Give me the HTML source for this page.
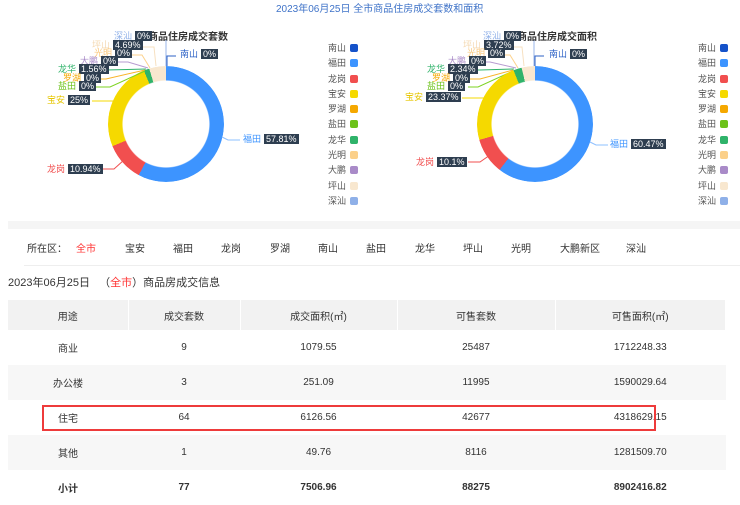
<!DOCTYPE html>
<html><head><meta charset="utf-8"><style>
*{margin:0;padding:0;box-sizing:border-box}
body{width:740px;height:505px;overflow:hidden;background:#fff;font-family:"Liberation Sans","Noto Sans CJK SC",sans-serif;position:relative;color:#333}
.a{position:absolute;white-space:nowrap}
.donut{position:absolute;width:116px;height:116px;border-radius:50%;-webkit-mask:radial-gradient(circle,transparent 43px,#000 44px);mask:radial-gradient(circle,transparent 43px,#000 44px)}
.lt{position:absolute;font-size:9px;line-height:11px;white-space:nowrap}
.bx{background:#2e3e50;color:#fff;padding:0 2px;margin-left:3px;font-size:9px}
.lg{position:absolute;font-size:9px;color:#555;line-height:11px}
.lg i{display:inline-block;width:8px;height:8px;border-radius:2px;margin-left:4px;vertical-align:-1px}
.tab{position:absolute;top:240px;font-size:10px;color:#333}
table{position:absolute;left:8px;top:300px;width:718px;border-collapse:collapse;font-size:10px;color:#333}
td,th{text-align:center;font-weight:normal;height:35px}
th{background:#f2f2f2;border-right:1px solid #fff;height:30px}
tr.g td{background:#f7f7f7}
td.b{font-weight:700;font-family:"Liberation Sans","Noto Sans CJK SC",sans-serif}
</style></head><body>
<div class="a" style="left:276px;top:0;font-size:10px;color:#3f73c8">2023年06月25日 全市商品住房成交套数和面积</div>

<div class="donut" style="left:108px;top:66px;background:conic-gradient(#3d94ff 0 57.81%,#f14f4f 0 68.75%,#f5d900 0 93.75%,#2fb36a 0 95.31%,#f8e7cf 0 100%)"></div>
<div class="a" style="left:148px;top:28px;font-size:10px;font-weight:bold;color:#333">商品住房成交套数</div>
<svg class="a" style="left:0;top:0" width="740" height="220" fill="none" stroke-width="1">
<path d="M166 66 V40" stroke="#9ab6e8"/><path d="M167 66 V56 H176" stroke="#2d62c6"/>
<path d="M156 66 L154 47 H140" stroke="#f7e0c0"/><path d="M150 68 L142 55 H130" stroke="#fcd28c"/>
<path d="M148 68 L128 62 H116" stroke="#b79bd0"/><path d="M146 69 L106 70 H104" stroke="#2fb36a"/>
<path d="M145 70 L106 79 H98" stroke="#f9b428"/><path d="M145 71 L110 87 H94" stroke="#7ed321"/>
<path d="M118 101 H92" stroke="#f5d900"/><path d="M124 160 L114 169 H102" stroke="#f14f4f"/>
<path d="M222 137 L228 140 H240" stroke="#8ec0ff"/>
<path d="M534 66 V40" stroke="#9ab6e8"/><path d="M535 66 V56 H544" stroke="#2d62c6"/>
<path d="M524 66 L522 47 H508" stroke="#f7e0c0"/><path d="M518 68 L510 55 H498" stroke="#fcd28c"/>
<path d="M516 68 L490 62 H485" stroke="#b79bd0"/><path d="M514 69 L480 70 H476" stroke="#2fb36a"/>
<path d="M513 70 L480 79 H470" stroke="#f9b428"/><path d="M513 71 L478 87 H468" stroke="#7ed321"/>
<path d="M486 98 H462" stroke="#f5d900"/><path d="M490 155 L480 162 H468" stroke="#f14f4f"/>
<path d="M590 142 L596 145 H608" stroke="#8ec0ff"/>
</svg>
<div class="lt" style="left:114px;top:31px;color:#8fb0e8">深汕<span class="bx">0%</span></div>
<div class="lt" style="left:92px;top:40px;color:#f4d8b0">坪山<span class="bx">4.69%</span></div>
<div class="lt" style="left:94px;top:48px;color:#fbc87a">光明<span class="bx">0%</span></div>
<div class="lt" style="left:80px;top:56px;color:#a98bc8">大鹏<span class="bx">0%</span></div>
<div class="lt" style="left:58px;top:64px;color:#2fb36a">龙华<span class="bx">1.56%</span></div>
<div class="lt" style="left:63px;top:73px;color:#f5a800">罗湖<span class="bx">0%</span></div>
<div class="lt" style="left:58px;top:81px;color:#6cc21a">盐田<span class="bx">0%</span></div>
<div class="lt" style="left:47px;top:95px;color:#e6c600">宝安<span class="bx">25%</span></div>
<div class="lt" style="left:47px;top:164px;color:#f14f4f">龙岗<span class="bx">10.94%</span></div>
<div class="lt" style="left:243px;top:134px;color:#3d94ff">福田<span class="bx">57.81%</span></div>
<div class="lt" style="left:180px;top:49px;color:#2d62c6">南山<span class="bx">0%</span></div>

<div class="donut" style="left:477px;top:66px;background:conic-gradient(#3d94ff 0 60.47%,#f14f4f 0 70.57%,#f5d900 0 93.94%,#2fb36a 0 96.28%,#f8e7cf 0 100%)"></div>
<div class="a" style="left:517px;top:28px;font-size:10px;font-weight:bold;color:#333">商品住房成交面积</div>
<div class="lt" style="left:483px;top:31px;color:#8fb0e8">深汕<span class="bx">0%</span></div>
<div class="lt" style="left:463px;top:40px;color:#f4d8b0">坪山<span class="bx">3.72%</span></div>
<div class="lt" style="left:467px;top:48px;color:#fbc87a">光明<span class="bx">0%</span></div>
<div class="lt" style="left:448px;top:56px;color:#a98bc8">大鹏<span class="bx">0%</span></div>
<div class="lt" style="left:427px;top:64px;color:#2fb36a">龙华<span class="bx">2.34%</span></div>
<div class="lt" style="left:432px;top:73px;color:#f5a800">罗湖<span class="bx">0%</span></div>
<div class="lt" style="left:427px;top:81px;color:#6cc21a">盐田<span class="bx">0%</span></div>
<div class="lt" style="left:405px;top:92px;color:#e6c600">宝安<span class="bx">23.37%</span></div>
<div class="lt" style="left:416px;top:157px;color:#f14f4f">龙岗<span class="bx">10.1%</span></div>
<div class="lt" style="left:610px;top:139px;color:#3d94ff">福田<span class="bx">60.47%</span></div>
<div class="lt" style="left:549px;top:49px;color:#2d62c6">南山<span class="bx">0%</span></div>

<div class="lg" style="left:328px;top:41px;line-height:15.3px">南山<i style="background:#1552c9"></i><br>福田<i style="background:#3d94ff"></i><br>龙岗<i style="background:#f14f4f"></i><br>宝安<i style="background:#f5d900"></i><br>罗湖<i style="background:#f5a800"></i><br>盐田<i style="background:#6cc21a"></i><br>龙华<i style="background:#2fb36a"></i><br>光明<i style="background:#fbd08a"></i><br>大鹏<i style="background:#a98bc8"></i><br>坪山<i style="background:#f8e7cf"></i><br>深汕<i style="background:#8fb0e8"></i></div>
<div class="lg" style="left:698px;top:41px;line-height:15.3px">南山<i style="background:#1552c9"></i><br>福田<i style="background:#3d94ff"></i><br>龙岗<i style="background:#f14f4f"></i><br>宝安<i style="background:#f5d900"></i><br>罗湖<i style="background:#f5a800"></i><br>盐田<i style="background:#6cc21a"></i><br>龙华<i style="background:#2fb36a"></i><br>光明<i style="background:#fbd08a"></i><br>大鹏<i style="background:#a98bc8"></i><br>坪山<i style="background:#f8e7cf"></i><br>深汕<i style="background:#8fb0e8"></i></div>

<div class="a" style="left:8px;top:221px;width:732px;height:8px;background:#f5f5f5"></div>
<div class="tab" style="left:27px">所在区：</div>
<div class="tab" style="left:76px;color:#f33">全市</div>
<div class="tab" style="left:125px">宝安</div>
<div class="tab" style="left:173px">福田</div>
<div class="tab" style="left:221px">龙岗</div>
<div class="tab" style="left:270px">罗湖</div>
<div class="tab" style="left:318px">南山</div>
<div class="tab" style="left:366px">盐田</div>
<div class="tab" style="left:415px">龙华</div>
<div class="tab" style="left:463px">坪山</div>
<div class="tab" style="left:511px">光明</div>
<div class="tab" style="left:560px">大鹏新区</div>
<div class="tab" style="left:626px">深汕</div>
<div class="a" style="left:24px;top:265px;width:716px;height:1px;background:#eee"></div>
<div class="a" style="left:8px;top:274px;font-size:11px;color:#333">2023年06月25日 &nbsp;&nbsp;（<span style="color:#f33">全市</span>）商品房成交信息</div>

<table>
<tr><th style="width:120px">用途</th><th style="width:112px">成交套数</th><th style="width:157px">成交面积(㎡)</th><th style="width:158px">可售套数</th><th>可售面积(㎡)</th></tr>
<tr><td>商业</td><td>9</td><td>1079.55</td><td>25487</td><td>1712248.33</td></tr>
<tr class="g"><td>办公楼</td><td>3</td><td>251.09</td><td>11995</td><td>1590029.64</td></tr>
<tr><td>住宅</td><td>64</td><td>6126.56</td><td>42677</td><td>4318629.15</td></tr>
<tr class="g"><td>其他</td><td>1</td><td>49.76</td><td>8116</td><td>1281509.70</td></tr>
<tr><td class="b">小计</td><td class="b">77</td><td class="b">7506.96</td><td class="b">88275</td><td class="b">8902416.82</td></tr>
</table>
<div class="a" style="left:42px;top:405px;width:614px;height:26px;border:2px solid #ee3b3b"></div>
</body></html>
